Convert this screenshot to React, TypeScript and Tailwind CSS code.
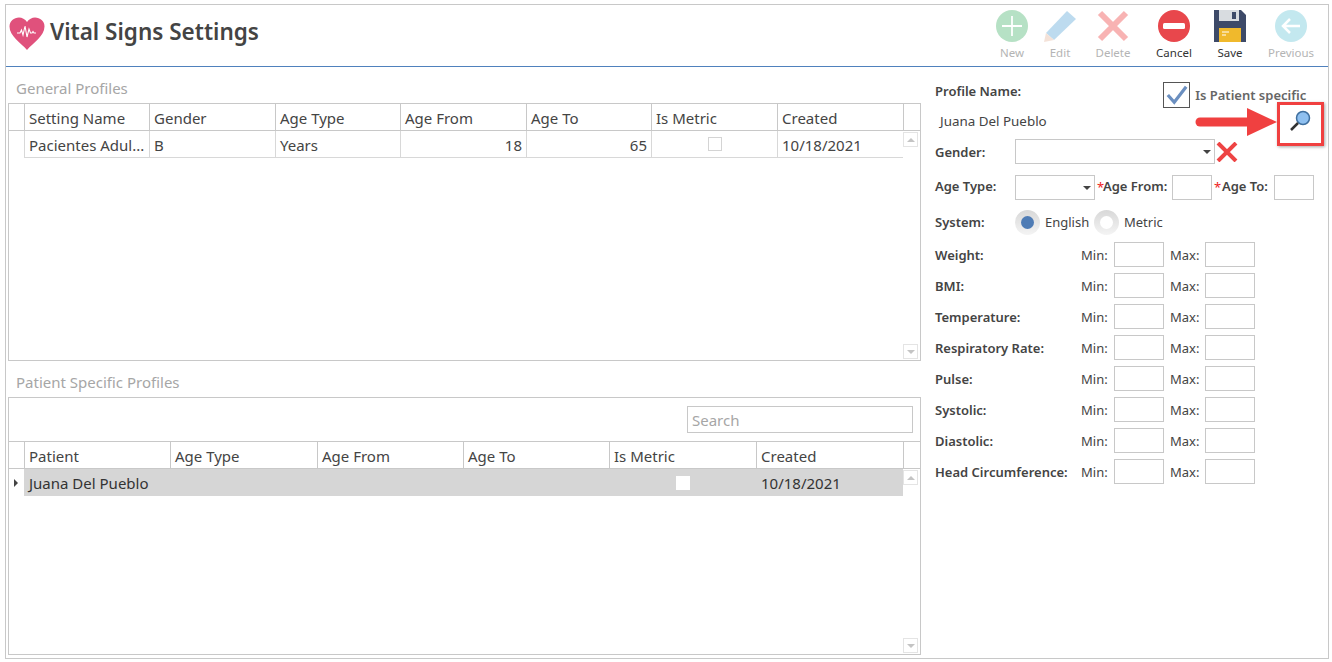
import React from 'react';

const font = { fontFamily: '"Noto Sans", "Open Sans", sans-serif' };

function Field({ w }: { w: string }) {
  return <div className={`h-[25px] border border-[#c8c8c8] bg-white ${w}`} />;
}

function Caret() {
  return <span className="absolute right-[3px] top-[10px] h-0 w-0 border-x-[4px] border-t-[4px] border-x-transparent border-t-[#444]" />;
}

function ScrollBtn({ up }: { up?: boolean }) {
  return (
    <div className="flex h-[15px] w-[15px] items-center justify-center border border-[#e4e4e4] bg-white">
      {up ? (
        <span className="h-0 w-0 border-x-[4px] border-b-[4px] border-x-transparent border-b-[#c4c4c4]" />
      ) : (
        <span className="h-0 w-0 border-x-[4px] border-t-[4px] border-x-transparent border-t-[#c4c4c4]" />
      )}
    </div>
  );
}

function ToolItem({ label, width, faded, children }: { label: string; width: string; faded?: boolean; children: React.ReactNode }) {
  return (
    <div className={`flex flex-col items-center ${width}`}>
      <div className={`flex h-[33px] w-[34px] items-center justify-center ${faded ? 'opacity-40' : ''}`}>{children}</div>
      <span className={`mt-[3px] text-[11.5px] leading-[16px] ${faded ? 'text-[#b4b4b4]' : 'text-[#333]'}`}>{label}</span>
    </div>
  );
}

const generalCols = ['w-[125px]', 'w-[126px]', 'w-[125px]', 'w-[126px]', 'w-[125px]', 'w-[126px]', 'w-[126px]'];
const generalHead = ['Setting Name', 'Gender', 'Age Type', 'Age From', 'Age To', 'Is Metric', 'Created'];
const patientCols = ['w-[146px]', 'w-[147px]', 'w-[146px]', 'w-[146px]', 'w-[147px]', 'w-[147px]'];
const patientHead = ['Patient', 'Age Type', 'Age From', 'Age To', 'Is Metric', 'Created'];

function HeadRow({ cols, heads }: { cols: string[]; heads: string[] }) {
  return (
    <div className="flex h-[27px] border-b border-[#c8c8c8]">
      <div className="w-[16px] shrink-0 border-r border-[#c8c8c8]" />
      {heads.map((h, i) => (
        <div key={h} className={`${cols[i]} shrink-0 border-r border-[#c8c8c8] pl-[4px] text-[15px] leading-[29px] text-[#444]`}>
          {h}
        </div>
      ))}
    </div>
  );
}

const limits = ['Weight:', 'BMI:', 'Temperature:', 'Respiratory Rate:', 'Pulse:', 'Systolic:', 'Diastolic:', 'Head Circumference:'];

export default function App() {
  return (
    <div className="h-[662px] w-[1332px] overflow-hidden bg-white pl-[5px] pt-[4px]" style={font}>
      <div className="relative h-[655px] w-[1324px] border border-[#c8c8c8]">
        {/* header */}
        <div className="flex h-[62px] items-start border-b border-[#4f81bd]">
          <svg viewBox="0 0 36 33" className="ml-[3px] mt-[12px] h-[33px] w-[36px]">
            <path d="M18 33 C12 26 0.500 19 0.500 9.500 C0.500 4 5 0.500 10 0.500 C13 0.500 16 2 18 5 C20 2 23 0.500 26 0.500 C31 0.500 35.500 4 35.500 9.500 C35.500 19 24 26 18 33Z" fill="#e0517c" />
            <path d="M8 16h3l1.500-3 1.500 5 2-9 2 11 2-8 1.500 4h1.500l1-1.500 1 1.500h2" fill="none" stroke="#fff" strokeWidth="1.100" />
          </svg>
          <h1 className="ml-[5px] mt-[9px] text-[22.5px] font-semibold leading-[36px] text-[#444]">Vital Signs Settings</h1>
          <div className="ml-auto mt-[4px] flex">
            <ToolItem label="New" width="w-[48px]" faded>
              <svg viewBox="0 0 32 32" className="h-[32px] w-[32px]">
                <circle cx="16" cy="16" r="16" fill="#4cb56f" />
                <path d="M16 6v20M6 16h20" stroke="#fff" strokeWidth="1.800" />
              </svg>
            </ToolItem>
            <ToolItem label="Edit" width="w-[48px]" faded>
              <svg viewBox="0 0 32 32" className="h-[32px] w-[32px]">
                <path d="M2 23 L23 1 L32 9 L10 30Z" fill="#5ba8d8" />
                <path d="M2 23 L10 30 L0 32Z" fill="#e5b7a0" />
              </svg>
            </ToolItem>
            <ToolItem label="Delete" width="w-[58px]" faded>
              <svg viewBox="0 0 32 32" className="h-[32px] w-[32px]">
                <path d="M3 3 L29 29 M29 3 L3 29" stroke="#f04444" strokeWidth="6" />
              </svg>
            </ToolItem>
            <ToolItem label="Cancel" width="w-[64px]">
              <svg viewBox="0 0 32 32" className="h-[32px] w-[32px]">
                <circle cx="16" cy="16" r="16" fill="#e8474c" />
                <rect x="5" y="13" width="22" height="6" rx="1.500" fill="#fff" />
              </svg>
            </ToolItem>
            <ToolItem label="Save" width="w-[48px]">
              <svg viewBox="0 0 32 32" className="h-[32px] w-[32px]">
                <path d="M0 0H27L32 5V32H0Z" fill="#3d4a68" />
                <rect x="5" y="0" width="20" height="11" fill="#d8dce0" />
                <rect x="18" y="2" width="4" height="7" fill="#3d4a68" />
                <rect x="5" y="18" width="22" height="14" fill="#f0b92c" />
                <path d="M8 22h7M8 25h4" stroke="#fff" strokeWidth="1" />
              </svg>
            </ToolItem>
            <ToolItem label="Previous" width="w-[74px]" faded>
              <svg viewBox="0 0 32 32" className="h-[32px] w-[32px]">
                <circle cx="16" cy="16" r="16" fill="#6cc7d8" />
                <path d="M25 16H8M15 9l-7 7 7 7" fill="none" stroke="#fff" strokeWidth="2.500" />
              </svg>
            </ToolItem>
          </div>
        </div>

        <div className="flex">
          {/* grids */}
          <div className="ml-[2px] w-[913px] shrink-0">
            <div className="h-[36px] pl-[8px] pt-[10px] text-[15px] leading-[22px] text-[#a6a6a6]">General Profiles</div>
            <div className="relative h-[258px] border border-[#c8c8c8]">
              <HeadRow cols={generalCols} heads={generalHead} />
              <div className="ml-[15px] flex h-[27px] w-[879px] border-b border-[#d8d8d8] text-[15px] leading-[29px] text-[#444]">
                <div className="w-[126px] shrink-0 border-x border-[#d8d8d8] pl-[4px]">Pacientes Adul...</div>
                <div className="w-[126px] shrink-0 border-r border-[#d8d8d8] pl-[4px]">B</div>
                <div className="w-[125px] shrink-0 border-r border-[#d8d8d8] pl-[4px]">Years</div>
                <div className="w-[126px] shrink-0 border-r border-[#d8d8d8] pr-[4px] text-right">18</div>
                <div className="w-[125px] shrink-0 border-r border-[#d8d8d8] pr-[4px] text-right">65</div>
                <div className="flex w-[126px] shrink-0 items-center justify-center border-r border-[#d8d8d8]">
                  <span className="h-[14px] w-[14px] border border-[#d4d4d4] bg-white" />
                </div>
                <div className="w-[125px] shrink-0 pl-[4px]">10/18/2021</div>
              </div>
              <div className="absolute right-[2px] top-[28px]"><ScrollBtn up /></div>
              <div className="absolute bottom-[1px] right-[2px]"><ScrollBtn /></div>
            </div>

            <div className="h-[36px] pl-[8px] pt-[10px] text-[15px] leading-[22px] text-[#a6a6a6]">Patient Specific Profiles</div>
            <div className="relative h-[258px] border border-[#c8c8c8]">
              <div className="flex h-[44px] items-start justify-end border-b border-[#c8c8c8] pr-[7px] pt-[8px]">
                <div className="h-[27px] w-[226px] border border-[#c8c8c8] pl-[4px] text-[15px] leading-[27px] text-[#a6a6a6]">Search</div>
              </div>
              <HeadRow cols={patientCols} heads={patientHead} />
              <div className="relative flex h-[27px]">
                <span className="absolute left-[5px] top-[10px] h-0 w-0 border-y-[4px] border-l-[4px] border-y-transparent border-l-[#444]" />
                <div className="ml-[15px] flex h-[27px] w-[879px] bg-[#d6d6d6] text-[15px] leading-[29px] text-[#333]">
                  <div className="w-[585px] shrink-0 pl-[5px]">Juana Del Pueblo</div>
                  <div className="flex w-[147px] shrink-0 items-center justify-center">
                    <span className="h-[14px] w-[14px] bg-white" />
                  </div>
                  <div className="pl-[5px]">10/18/2021</div>
                </div>
              </div>
              <div className="absolute right-[2px] top-[72px]"><ScrollBtn up /></div>
              <div className="absolute bottom-[1px] right-[2px]"><ScrollBtn /></div>
            </div>
          </div>

          {/* form */}
          <div className="ml-[14px] w-[385px] text-[13px] text-[#444]">
            <div className="flex h-[45px]">
              <span className="mt-[15px] font-semibold leading-[18px]">Profile Name:</span>
              <div className="ml-[142px] mt-[15px] flex items-start">
                <span className="flex h-[26px] w-[27px] items-center justify-center border border-[#555] bg-white">
                  <svg viewBox="0 0 24 24" className="h-[22px] w-[22px]">
                    <path d="M2 12l7 8L22 3" fill="none" stroke="#6b8fc0" strokeWidth="3.500" />
                  </svg>
                </span>
                <span className="ml-[5px] mt-[4px] whitespace-nowrap font-semibold leading-[18px] text-[#666]">Is Patient specific</span>
              </div>
            </div>
            <div className="h-[27px] pl-[5px] text-[13.4px] leading-[18px] text-[#444]">Juana Del Pueblo</div>

            <div className="flex h-[36px]">
              <span className="mt-[4px] w-[80px] font-semibold leading-[18px]">Gender:</span>
              <div className="relative h-[25px] w-[200px] border border-[#c8c8c8]"><Caret /></div>
              <svg viewBox="0 0 22 20" className="ml-[1px] mt-[3px] h-[20px] w-[22px]">
                <path d="M2 1 L20 19 M20 1 L2 19" stroke="#ee4444" strokeWidth="4" />
              </svg>
            </div>

            <div className="flex h-[35px]">
              <span className="mt-[2px] w-[80px] font-semibold leading-[18px]">Age Type:</span>
              <div className="relative h-[25px] w-[80px] border border-[#c8c8c8]"><Caret /></div>
              <span className="ml-[2px] mt-[3px] w-[6px] leading-[18px] text-[#ee2222]">*</span>
              <span className="mt-[2px] w-[69px] whitespace-nowrap font-semibold leading-[18px]">Age From:</span>
              <Field w="w-[40px]" />
              <span className="ml-[2px] mt-[3px] w-[8px] leading-[18px] text-[#ee2222]">*</span>
              <span className="mt-[2px] w-[52px] whitespace-nowrap font-semibold leading-[18px]">Age To:</span>
              <Field w="w-[40px]" />
            </div>

            <div className="flex h-[32px] items-start">
              <span className="mt-[3px] w-[80px] font-semibold leading-[18px]">System:</span>
              <span className="flex h-[25px] w-[25px] items-center justify-center rounded-full bg-gradient-to-b from-[#d8d8d8] to-[#f4f4f4]">
                <span className="h-[13px] w-[13px] rounded-full bg-[#4f7cb5]" />
              </span>
              <span className="ml-[5px] mt-[3px] w-[49px] leading-[18px]">English</span>
              <span className="flex h-[25px] w-[25px] items-center justify-center rounded-full bg-gradient-to-b from-[#d8d8d8] to-[#f4f4f4]">
                <span className="h-[13px] w-[13px] rounded-full bg-white" />
              </span>
              <span className="ml-[5px] mt-[3px] leading-[18px]">Metric</span>
            </div>

            {limits.map((l) => (
              <div key={l} className="flex h-[31px] items-start">
                <span className="mt-[4px] w-[146px] whitespace-nowrap font-semibold leading-[18px]">{l}</span>
                <span className="mt-[4px] w-[33px] leading-[18px]">Min:</span>
                <Field w="w-[50px]" />
                <span className="ml-[6px] mt-[4px] w-[35px] leading-[18px]">Max:</span>
                <Field w="w-[50px]" />
              </div>
            ))}
          </div>
        </div>

        {/* search button with callout */}
        <svg viewBox="0 0 24 24" className="absolute left-[1282px] top-[104px] h-[24px] w-[24px]">
          <circle cx="15" cy="9" r="6.500" fill="#8fc0f0" stroke="#3f6f9f" strokeWidth="1.500" />
          <path d="M10 14 L3 21" stroke="#333" strokeWidth="2.500" />
        </svg>
        <div className="absolute left-[1271px] top-[97px] h-[44px] w-[47px] border-[3px] border-[#f04040] shadow-[1px_1px_3px_rgba(0,0,0,0.35)]" />
        <svg viewBox="0 0 84 36" className="absolute left-[1189px] top-[99px] h-[36px] w-[84px]">
          <path d="M5 18 H56" stroke="#f04040" strokeWidth="9" strokeLinecap="round" />
          <path d="M52 4 L82 18 L52 32Z" fill="#f04040" />
        </svg>
      </div>
    </div>
  );
}
